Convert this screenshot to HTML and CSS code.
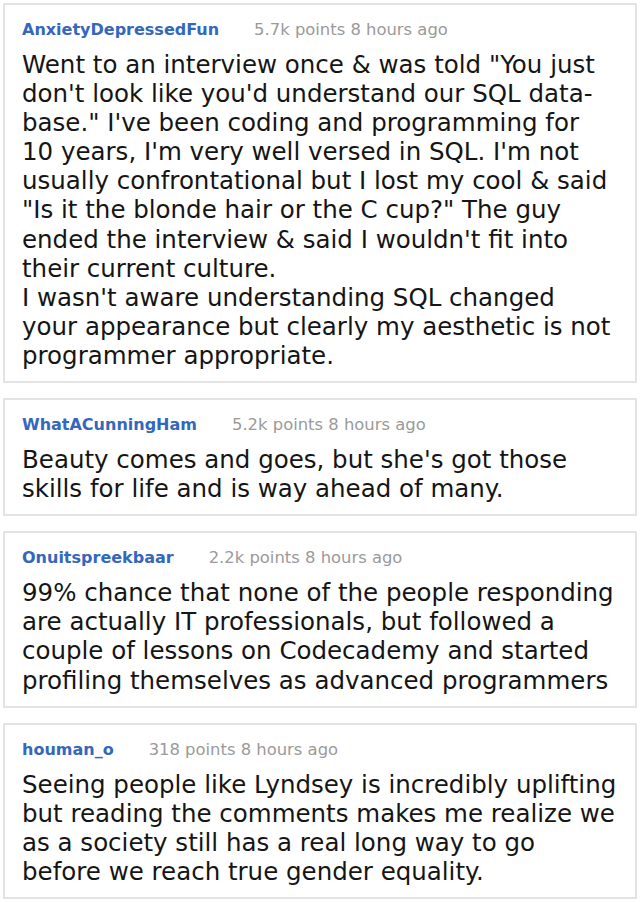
FILE: index.html
```html
<!DOCTYPE html>
<html>
<head>
<meta charset="utf-8">
<link rel="stylesheet" href="styles.css">
</head>
<body>
<div class="thread">
  <div class="comment">
    <div class="meta"><span class="user">AnxietyDepressedFun</span><span class="info">5.7k points 8 hours ago</span></div>
    <p class="body">Went to an interview once &amp; was told "You just<br>don't look like you'd understand our SQL data-<br>base." I've been coding and programming for<br>10 years, I'm very well versed in SQL. I'm not<br>usually confrontational but I lost my cool &amp; said<br>"Is it the blonde hair or the C cup?" The guy<br>ended the interview &amp; said I wouldn't fit into<br>their current culture.<br>I wasn't aware understanding SQL changed<br>your appearance but clearly my aesthetic is not<br>programmer appropriate.</p>
  </div>
  <div class="comment">
    <div class="meta"><span class="user">WhatACunningHam</span><span class="info">5.2k points 8 hours ago</span></div>
    <p class="body">Beauty comes and goes, but she's got those<br>skills for life and is way ahead of many.</p>
  </div>
  <div class="comment">
    <div class="meta"><span class="user">Onuitspreekbaar</span><span class="info">2.2k points 8 hours ago</span></div>
    <p class="body">99% chance that none of the people responding<br>are actually IT professionals, but followed a<br>couple of lessons on Codecademy and started<br>profiling themselves as advanced programmers</p>
  </div>
  <div class="comment">
    <div class="meta"><span class="user">houman_o</span><span class="info">318 points 8 hours ago</span></div>
    <p class="body">Seeing people like Lyndsey is incredibly uplifting<br>but reading the comments makes me realize we<br>as a society still has a real long way to go<br>before we reach true gender equality.</p>
  </div>
</div>
</body>
</html>
```
FILE: styles.css
```css
html, body {
  margin: 0;
  padding: 0;
  background: #ffffff;
}
body {
  font-family: "DejaVu Sans", Verdana, sans-serif;
}
.thread {
  display: flex;
  flex-direction: column;
  gap: 15px;
  padding: 3px 3px 0 3px;
}
.comment {
  border: 2px solid #e3e3e3;
  padding: 15px 17px 11px 17px;
  background: #fff;
}
.meta {
  display: flex;
  align-items: baseline;
  gap: 35px;
  font-size: 16px;
  line-height: 19px;
  white-space: nowrap;
}
.user {
  color: #3467bd;
  font-weight: bold;
}
.info {
  color: #9a9a9a;
  font-size: 16.4px;
}
.body {
  margin: 11px 0 0 0;
  font-size: 24.5px;
  line-height: 29.1px;
  color: #151515;
  white-space: nowrap;
}
```
